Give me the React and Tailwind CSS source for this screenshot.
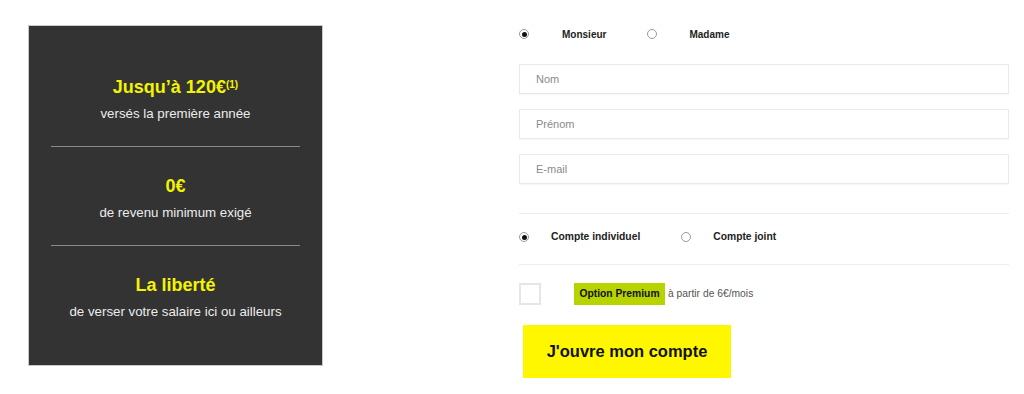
import React from "react";

function Radio({ checked }) {
  return (
    <span className="inline-flex h-[10px] w-[10px] shrink-0 items-center justify-center rounded-full border border-[#9a9a9a] bg-white">
      {checked && <span className="h-[5px] w-[5px] rounded-full bg-[#111]" />}
    </span>
  );
}

function Field({ label }) {
  return (
    <div className="flex h-[30px] w-full items-center border border-[#e9e9e9] bg-white pl-[16px] text-[11px] text-[#8a8a8a] shadow-[0_1px_1px_rgba(0,0,0,0.03)]">
      {label}
    </div>
  );
}

function Block({ title, sup, text }) {
  return (
    <div className="flex flex-col items-center">
      <div className="flex h-[24px] items-center text-[18px] font-bold leading-[24px] text-[#f4f400]">
        {title}
        {sup && <sup className="relative -top-[2px] text-[10px] leading-none">{sup}</sup>}
      </div>
      <div className="mt-[5px] h-[20px] text-[13.3px] leading-[20px] text-[#ececec]">{text}</div>
    </div>
  );
}

export default function App() {
  return (
    <div
      className="flex h-[394px] w-[1024px] items-start bg-white pl-[28px] pt-[25px]"
      style={{ fontFamily: '"Liberation Sans", Arial, sans-serif' }}
    >
      <div className="flex h-[341px] w-[295px] flex-col border border-[#c9c9c9] bg-[#333333] px-[22px] pt-[49px]">
        <Block title="Jusqu’à 120€" sup="(1)" text="versés la première année" />
        <div className="mt-[22px] h-px bg-[#8a8a8a]" />
        <div className="mt-[27px]">
          <Block title="0€" text="de revenu minimum exigé" />
        </div>
        <div className="mt-[22px] h-px bg-[#8a8a8a]" />
        <div className="mt-[27px]">
          <Block title="La liberté" text="de verser votre salaire ici ou ailleurs" />
        </div>
      </div>

      <div className="ml-[196px] flex w-[490px] flex-col">
        <div className="flex h-[18px] items-center text-[10px] font-bold text-[#222]">
          <Radio checked />
          <span className="ml-[33px]">Monsieur</span>
          <span className="ml-[41px] flex"><Radio /></span>
          <span className="ml-[32px]">Madame</span>
        </div>

        <div className="mt-[21px] flex flex-col gap-[15px]">
          <Field label="Nom" />
          <Field label="Prénom" />
          <Field label="E-mail" />
        </div>

        <div className="mt-[29px] h-px bg-[#ededed]" />

        <div className="mt-[14px] flex h-[18px] items-center text-[10.3px] font-bold text-[#222]">
          <Radio checked />
          <span className="ml-[22px]">Compte individuel</span>
          <span className="ml-[41px] flex"><Radio /></span>
          <span className="ml-[22px]">Compte joint</span>
        </div>

        <div className="mt-[18px] h-px bg-[#ededed]" />

        <div className="mt-[18px] flex h-[22px] items-center">
          <span className="h-[22px] w-[22px] border-2 border-[#e6e6e6] bg-white" />
          <span className="ml-[33px] flex h-[22px] w-[91px] items-center justify-center bg-[#b8d400] text-[10.3px] font-bold text-[#111]">
            Option Premium
          </span>
          <span className="ml-[3px] text-[10.3px] text-[#555]">à partir de 6€/mois</span>
        </div>

        <div className="ml-[4px] mt-[20px] flex h-[53px] w-[208px] items-center justify-center bg-[#fff700] text-[16.5px] font-bold text-[#111]">
          J'ouvre mon compte
        </div>
      </div>
    </div>
  );
}
